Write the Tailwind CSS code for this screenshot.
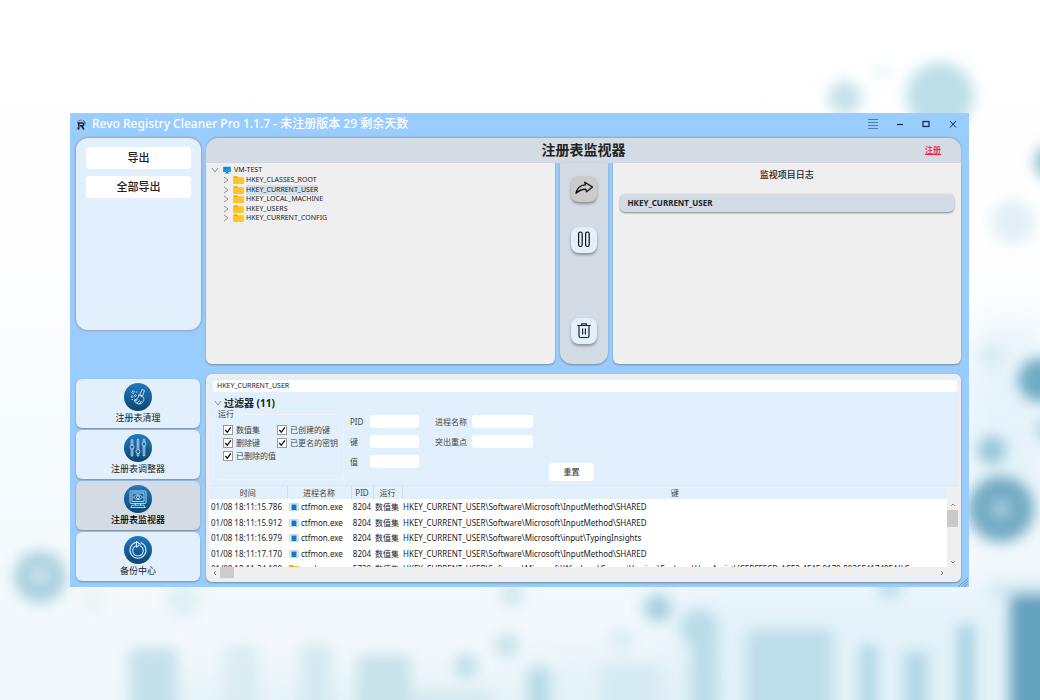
<!DOCTYPE html>
<html lang="zh-CN">
<head>
<meta charset="utf-8">
<meta name="viewport" content="width=device-width, initial-scale=1">
<title>Revo Registry Cleaner Pro</title>
<script src="https://cdn.jsdelivr.net/npm/@tailwindcss/browser@4"></script>
</head>
<body class="relative isolate min-h-screen overflow-x-hidden bg-white py-[113px] pr-[71px] pl-[70px] font-['Noto_Sans','Noto_Sans_CJK_SC',sans-serif] text-[#222]">

<!-- Backdrop -->
<svg class="absolute inset-0 -z-10 h-full w-full" viewBox="0 0 1040 700" preserveAspectRatio="xMidYMid slice" aria-hidden="true">
  <defs>
    <linearGradient id="base" x1="0" y1="0" x2="0" y2="1">
      <stop offset="0" stop-color="#ffffff"/><stop offset=".35" stop-color="#fefefe"/><stop offset=".6" stop-color="#f6fbfe"/><stop offset="1" stop-color="#f1f8fb"/>
    </linearGradient>
    <filter id="b20" x="-60%" y="-60%" width="220%" height="220%"><feGaussianBlur stdDeviation="20"/></filter>
    <filter id="b7" x="-10%" y="-10%" width="120%" height="120%"><feGaussianBlur stdDeviation="7"/></filter>
  </defs>
  <rect width="1040" height="700" fill="url(#base)"/>
  <g filter="url(#b20)">
    <ellipse cx="1010" cy="430" rx="50" ry="110" fill="#e6f3fa"/>
    <rect x="680" y="590" width="400" height="150" fill="#e3f2f9"/>
    <rect x="540" y="660" width="200" height="80" fill="#dff0f6"/>
    <rect x="150" y="680" width="500" height="60" fill="#e4f2f6"/>
  </g>
  <g filter="url(#b7)">
    <circle cx="845" cy="98" r="17" fill="#c6e2eb"/>
    <circle cx="882" cy="72" r="10" fill="#eff8fa"/>
    <circle cx="940" cy="96" r="34" fill="#bddfe8"/>
    <circle cx="1053" cy="162" r="18" fill="#8dbccd"/>
    <circle cx="1013" cy="222" r="22" fill="#e2f0f6"/>
    <circle cx="992" cy="356" r="12" fill="#d8ebf2"/>
    <circle cx="1040" cy="380" r="22" fill="#70abc4"/>
    <circle cx="992" cy="450" r="14" fill="#95c6d9"/>
    <circle cx="1001" cy="509" r="33" fill="#72abc3"/>
    <circle cx="1001" cy="509" r="9" fill="#a6d0e0"/>
    <circle cx="1046" cy="430" r="8" fill="#8dbdcf"/>
    <circle cx="40" cy="577" r="26" fill="#a9d1de"/>
    <circle cx="40" cy="575" r="8" fill="#d5eaf0"/>
    <circle cx="183" cy="600" r="17" fill="#dfeff4"/>
    <circle cx="93" cy="602" r="10" fill="#e8f3f6"/>
    <circle cx="512" cy="595" r="12" fill="#d2e8ef"/>
    <circle cx="658" cy="608" r="16" fill="#bcdde8"/>
    <circle cx="658" cy="608" r="6" fill="#7fb8cc"/>
    <circle cx="507" cy="645" r="12" fill="#c6e2eb"/>
    <circle cx="466" cy="666" r="12" fill="#bedee8"/>
    <circle cx="622" cy="640" r="13" fill="#dceef4"/>
    <circle cx="699" cy="628" r="19" fill="#b8dce7"/>
    <circle cx="890" cy="586" r="13" fill="#bfdfeb"/>
    <rect x="129" y="648" width="48" height="80" fill="#c4e1ea"/>
    <rect x="224" y="645" width="34" height="80" fill="#d9edf2"/>
    <rect x="300" y="645" width="32" height="80" fill="#d5eaf0"/>
    <rect x="357" y="655" width="54" height="80" fill="#c8e3ea"/>
    <rect x="412" y="692" width="80" height="40" fill="#d3e9ef"/>
    <rect x="528" y="668" width="22" height="80" fill="#b5dae6"/>
    <rect x="600" y="665" width="60" height="80" fill="#d6eaf2"/>
    <rect x="692" y="635" width="25" height="90" fill="#b9dce8"/>
    <rect x="747" y="630" width="86" height="95" fill="#bddde8"/>
    <rect x="860" y="645" width="17" height="80" fill="#b0d7e5"/>
    <rect x="904" y="652" width="24" height="80" fill="#b2d8e5"/>
    <rect x="958" y="625" width="16" height="100" fill="#a5d0e1"/>
    <rect x="990" y="583" width="60" height="16" fill="#d0e9f3"/>
    <rect x="1010" y="594" width="60" height="130" fill="#65a2be"/>
  </g>
</svg>

<div class="relative flex flex-col bg-[#99ccff]">
  <!-- Title bar -->
  <header class="flex h-6 items-center pr-[11px] pb-[2px] pl-[6px]">
    <svg class="mr-[6px] h-[11px] w-[10px] shrink-0" viewBox="0 0 20 22" aria-hidden="true">
      <path d="M3 8h9.500c4 0 4 5.500 0 5.500H8M5.500 8v13M11 14l5 7" fill="none" stroke="#17202c" stroke-width="3.200"/>
      <path d="M3 6.500C4.500 3 8 1.500 11.500 2.500" fill="none" stroke="#d9606a" stroke-width="2.400"/>
      <path d="M13.500 3c3.800 1.200 5.300 4.500 4.300 8" fill="none" stroke="#2a6fb0" stroke-width="2.400"/>
      <path d="M1.500 21 5 15" stroke="#2a6fb0" stroke-width="2"/>
    </svg>
    <h1 class="flex-1 truncate text-[12px] leading-[22px] font-medium text-white">Revo Registry Cleaner Pro 1.1.7 - 未注册版本 29 剩余天数</h1>
    <div class="flex items-center gap-[17px] text-[#0e2a42]">
      <button aria-label="菜单"><svg class="h-3 w-3" viewBox="0 0 12 12"><path d="M1 1.500h10M1 4.500h10M1 7.500h10M1 10.500h10" stroke="#4d7da1"/></svg></button>
      <button aria-label="最小化"><svg class="h-[10px] w-[8px]" viewBox="0 0 8 10"><path d="M1 5.500h6" stroke="currentColor" stroke-width="1.200"/></svg></button>
      <button aria-label="最大化"><svg class="h-[10px] w-[10px]" viewBox="0 0 10 10"><rect x="2" y="2.500" width="6" height="5" fill="none" stroke="currentColor" stroke-width="1.200"/></svg></button>
      <button aria-label="关闭"><svg class="h-[10px] w-[10px]" viewBox="0 0 10 10"><path d="m2 2 6 6.500m0-6.500-6 6.500" stroke="currentColor"/></svg></button>
    </div>
  </header>

  <div class="flex gap-[5px] pt-px pr-2 pb-[5px] pl-[6px]">
    <!-- Left column -->
    <aside class="flex w-[125px] shrink-0 flex-col justify-between pb-px">
      <div class="flex min-h-48 flex-col gap-[7px] rounded-xl bg-[#e1f0fc] px-[10px] pt-[9px] shadow-[0_0_2px_1px_#97a3ae]">
        <button class="h-[22px] rounded bg-white pb-[2px] text-[11px] leading-none font-medium">导出</button>
        <button class="h-[22px] rounded bg-white pb-[2px] text-[11px] leading-none font-medium">全部导出</button>
      </div>
      <nav class="mr-px flex flex-col gap-[2px] text-[9px] leading-3">
        <a href="#clean" class="flex h-[49px] flex-col items-center rounded-md bg-[#e1f0fc] pt-1 shadow-[0_1px_2px_#7d8894]">
          <svg class="mb-px h-7 w-7" viewBox="0 0 28 28" fill="none" stroke="#d4e9f8" stroke-width=".9" stroke-linecap="round" stroke-linejoin="round">
            <defs><linearGradient id="disc" x1="0" y1="0" x2="0" y2="1"><stop offset="0" stop-color="#2279bd"/><stop offset="1" stop-color="#084672"/></linearGradient></defs>
            <circle cx="14" cy="14" r="14" fill="url(#disc)" stroke="none"/>
            <path d="m18.500 6.500 2 1-2 5.500-2.300-1.200z"/><path d="M15 12l4.700 2.500c.8 2.500-.7 5.500-3.700 6.500-3 .2-5-1.400-5.700-4.100 2.500-.2 4.200-2 4.700-4.900z"/><path d="m11 18 2.600-1.300m-1 3.300 3-2.200m-.2 3 2-2.600"/><path d="m8 9 1.300-1.300L10.600 9l-1.300 1.300zM10.500 12.500l.9-.9.9.9-.9.9zM7.300 13.500l.9-.9.9.9-.9.9zM8 16.500h.5M12.500 9h.5"/>
          </svg>注册表清理
        </a>
        <a href="#tune" class="flex h-[49px] flex-col items-center rounded-md bg-[#e1f0fc] pt-1 shadow-[0_1px_2px_#7d8894]">
          <svg class="mb-px h-7 w-7" viewBox="0 0 28 28" fill="none" stroke="#c5dff2" stroke-width=".9">
            <circle cx="14" cy="14" r="14" fill="url(#disc)" stroke="none"/>
            <path d="M7.200 6.500v4.500M8.800 6.500v4.500M7.200 15v7h1.600v-7M7.200 6.500c0-1.500 1.600-1.500 1.600 0M13.200 6v9.500M14.800 6v9.500M13.200 19.500V22h1.600v-2.500M13.200 6c0-1.500 1.600-1.500 1.600 0M19.200 6v2M20.800 6v2M19.200 12v10h1.600V12M19.200 6c0-1.500 1.600-1.500 1.600 0"/><circle cx="8" cy="13" r="2"/><circle cx="14" cy="17.500" r="2"/><circle cx="20" cy="10" r="2"/>
          </svg>注册表调整器
        </a>
        <a href="#monitor" aria-current="page" class="flex h-[49px] flex-col items-center rounded-md bg-[#d3dbe5] pt-1 font-medium text-black shadow-[0_1px_2px_#7d8894]">
          <svg class="mb-px h-7 w-7" viewBox="0 0 28 28" fill="none" stroke="#c5dff2" stroke-width=".9" stroke-linejoin="round">
            <circle cx="14" cy="14" r="14" fill="url(#disc)" stroke="none"/>
            <rect x="6" y="6" width="16" height="12.500" rx="1"/><rect x="8" y="8" width="12" height="8.500"/><path d="M9.500 12.200c2.500-3.200 6.500-3.200 9 0-2.500 3.200-6.500 3.200-9 0zM11.500 18.500v1.700m5-1.700v1.700M8 20.200h12l1.200 2.300H6.800z"/><circle cx="14" cy="12.200" r="1.500"/>
          </svg>注册表监视器
        </a>
        <a href="#backup" class="flex h-[49px] flex-col items-center rounded-md bg-[#e1f0fc] pt-1 shadow-[0_1px_2px_#7d8894]">
          <svg class="mb-px h-7 w-7" viewBox="0 0 28 28" fill="none" stroke="#d4e9f8" stroke-width="1.100" stroke-linecap="round" stroke-linejoin="round">
            <circle cx="14" cy="14" r="14" fill="url(#disc)" stroke="none"/>
            <path d="M11.500 6.600a8 8 0 1 0 5.500.2"/><path d="M11.500 10a5.300 5.300 0 1 0 5 0"/><path d="m12.500 5.500 3.800 2.800-3.800 2.800z"/>
          </svg>备份中心
        </a>
      </nav>
    </aside>

    <!-- Main column -->
    <main class="flex min-w-0 flex-1 flex-col">
      <div class="grid h-[25px] grid-cols-[1fr_auto_1fr] items-center rounded-t-xl bg-[#d3dbe5] pb-[2px] shadow-[0_-1px_2px_#97a3ae]">
        <h2 class="col-start-2 text-[14px] leading-[22px] font-bold">注册表监视器</h2>
        <a href="#register" class="mr-5 justify-self-end text-[8px] leading-3 font-medium text-[#f0202a] underline">注册</a>
      </div>

      <div class="grid min-h-[201px] grid-cols-[1fr_48px_1fr] gap-[5px]">
        <!-- Registry tree -->
        <section class="min-w-0 rounded-b-md bg-[#efefef] pt-[2px] pl-[5px] text-[7px] leading-[10px] text-[#222] shadow-[0_1px_2px_#7d8894]">
          <ul>
            <li>
              <div class="flex items-center">
                <svg class="mr-1 h-2 w-2" viewBox="0 0 8 8"><path d="M1 2l3 4 3-4" fill="none" stroke="#888" stroke-width=".9"/></svg>
                <svg class="mr-[3px] h-2 w-2" viewBox="0 0 8 8"><rect x=".2" y=".8" width="7.600" height="5.400" rx=".4" fill="#1089cf"/><path d="M.3 5 7.700.8v5H.3z" fill="#22b6e8" opacity=".5"/><path d="M3 6h2v.9h1v.6H2v-.6h1z" fill="#38719b"/></svg>
                VM-TEST
              </div>
              <ul class="pl-3">
                <li class="flex h-[10px] items-center"><svg class="mr-1 h-2 w-[6px]" viewBox="0 0 6 8"><path d="m1 1 4 3-4 3" fill="none" stroke="#888" stroke-width=".9"/></svg><svg class="mr-[2px] h-2 w-[11px]" viewBox="0 0 11 8"><path d="M.5.300h3.700l1 1.200h5.300V8H.5z" fill="#f5a90d"/><path d="M.5 2h10v6H.5z" fill="#ffc61f"/></svg>HKEY_CLASSES_ROOT</li>
                <li class="flex h-[9px] items-center"><svg class="mr-1 h-2 w-[6px]" viewBox="0 0 6 8"><path d="m1 1 4 3-4 3" fill="none" stroke="#888" stroke-width=".9"/></svg><svg class="mr-[2px] h-2 w-[11px]" viewBox="0 0 11 8"><path d="M.5.300h3.700l1 1.200h5.300V8H.5z" fill="#f5a90d"/><path d="M.5 2h10v6H.5z" fill="#ffc61f"/></svg><span class="bg-[#d3dfea]">HKEY_CURRENT_USER</span></li>
                <li class="flex h-[10px] items-center"><svg class="mr-1 h-2 w-[6px]" viewBox="0 0 6 8"><path d="m1 1 4 3-4 3" fill="none" stroke="#888" stroke-width=".9"/></svg><svg class="mr-[2px] h-2 w-[11px]" viewBox="0 0 11 8"><path d="M.5.300h3.700l1 1.200h5.300V8H.5z" fill="#f5a90d"/><path d="M.5 2h10v6H.5z" fill="#ffc61f"/></svg>HKEY_LOCAL_MACHINE</li>
                <li class="flex h-[9px] items-center"><svg class="mr-1 h-2 w-[6px]" viewBox="0 0 6 8"><path d="m1 1 4 3-4 3" fill="none" stroke="#888" stroke-width=".9"/></svg><svg class="mr-[2px] h-2 w-[11px]" viewBox="0 0 11 8"><path d="M.5.300h3.700l1 1.200h5.300V8H.5z" fill="#f5a90d"/><path d="M.5 2h10v6H.5z" fill="#ffc61f"/></svg>HKEY_USERS</li>
                <li class="flex h-[10px] items-center"><svg class="mr-1 h-2 w-[6px]" viewBox="0 0 6 8"><path d="m1 1 4 3-4 3" fill="none" stroke="#888" stroke-width=".9"/></svg><svg class="mr-[2px] h-2 w-[11px]" viewBox="0 0 11 8"><path d="M.5.300h3.700l1 1.200h5.300V8H.5z" fill="#f5a90d"/><path d="M.5 2h10v6H.5z" fill="#ffc61f"/></svg>HKEY_CURRENT_CONFIG</li>
              </ul>
            </li>
          </ul>
        </section>

        <!-- Actions -->
        <div class="flex flex-col items-center rounded-b-xl bg-[#d3dbe5] pt-[13px] pb-5 shadow-[0_1px_2px_#7d8894]">
          <button aria-label="添加监视" class="mb-[25px] flex size-[26px] items-center justify-center rounded-lg bg-[#cbcbcb] shadow-[0_2px_3px_#8b9096]">
            <svg class="h-[18px] w-[20px]" viewBox="0 0 20 18" fill="none" stroke="#111" stroke-width="1.300" stroke-linejoin="round"><path d="M10.800 2.200 18.500 7l-6 4.700-.6-2.400C8.500 9 5.200 10.500 2 13.300 2.800 8.500 6.500 5 11.400 4.900z"/></svg>
          </button>
          <button aria-label="暂停" class="flex size-[26px] items-center justify-center rounded-lg bg-[#e1f0fc] shadow-[0_2px_3px_#8b9096]">
            <svg class="h-[18px] w-[14px]" viewBox="0 0 14 18" fill="none" stroke="#111" stroke-width="1.200"><rect x="1.600" y="1" width="3.600" height="14.500" rx="1.800"/><rect x="8.600" y="1" width="3.600" height="14.500" rx="1.800"/></svg>
          </button>
          <button aria-label="删除" class="mt-auto flex size-[26px] items-center justify-center rounded-lg bg-[#e1f0fc] shadow-[0_2px_3px_#8b9096]">
            <svg class="h-[16px] w-[16px]" viewBox="0 0 16 16" fill="none" stroke="#222" stroke-width="1.200"><path d="M1.300 2.500h13.400M5.700 2.500V.8h4.600v1.700M3 2.700V13c0 1 .5 1.500 1.500 1.500h7c1 0 1.500-.5 1.500-1.500V2.700M6.600 5.500v6M9.400 5.500v6"/></svg>
          </button>
        </div>

        <!-- Watched items -->
        <section class="min-w-0 rounded-b-md bg-[#efefef] px-[7px] pt-[6px] shadow-[0_1px_2px_#7d8894]">
          <h3 class="text-center text-[9px] leading-3 font-medium">监视项目日志</h3>
          <button class="mt-[13px] block h-[18px] w-full rounded-[5px] bg-[#d3dbe5] px-2 pb-px text-left text-[8px] leading-none font-bold shadow-[0_1px_2px_#7d8894]">HKEY_CURRENT_USER</button>
        </section>
      </div>

      <!-- Log -->
      <section class="mt-[10px] flex flex-col rounded-md border-[3px] border-[#efefef] bg-[#e1f0fc] pb-px text-[8px] leading-[10px] text-[#444] shadow-[0_1px_2px_#7d8894]">
        <div class="pt-[3px] pr-px pl-1">
          <input aria-label="注册表项" value="HKEY_CURRENT_USER" class="block h-3 w-full rounded-[3px] bg-white px-1 text-[7px] leading-3 text-[#222] outline-none">
        </div>
        <button class="mt-[5px] ml-[5px] flex h-3 items-center self-start text-[10px] leading-3 font-bold text-[#222]">
          <svg class="mr-[2px] h-2 w-2" viewBox="0 0 8 8"><path d="M1 2l3 4 3-4" fill="none" stroke="#888" stroke-width=".9"/></svg>过滤器 (11)
        </button>

        <div class="flex h-[76px] items-start">
          <fieldset class="ml-1 h-[71px] w-[131px] rounded-sm border border-[#edf3f7] pl-[9px]">
            <legend class="-ml-[6px] px-px">运行</legend>
            <div class="grid grid-cols-[54px_auto] justify-start gap-y-[3px] pt-[6px] whitespace-nowrap">
              <label class="flex items-center gap-[3px]"><span class="grid"><input type="checkbox" checked class="peer col-start-1 row-start-1 size-[10px] appearance-none border border-[#999] bg-white"><svg class="pointer-events-none invisible col-start-1 row-start-1 size-[10px] peer-checked:visible" viewBox="0 0 10 10"><path d="m2.300 5 2 2.300 3.500-5" fill="none" stroke="#111" stroke-width="1.300"/></svg></span>数值集</label>
              <label class="flex items-center gap-[3px]"><span class="grid"><input type="checkbox" checked class="peer col-start-1 row-start-1 size-[10px] appearance-none border border-[#999] bg-white"><svg class="pointer-events-none invisible col-start-1 row-start-1 size-[10px] peer-checked:visible" viewBox="0 0 10 10"><path d="m2.300 5 2 2.300 3.500-5" fill="none" stroke="#111" stroke-width="1.300"/></svg></span>已创建的键</label>
              <label class="flex items-center gap-[3px]"><span class="grid"><input type="checkbox" checked class="peer col-start-1 row-start-1 size-[10px] appearance-none border border-[#999] bg-white"><svg class="pointer-events-none invisible col-start-1 row-start-1 size-[10px] peer-checked:visible" viewBox="0 0 10 10"><path d="m2.300 5 2 2.300 3.500-5" fill="none" stroke="#111" stroke-width="1.300"/></svg></span>删除键</label>
              <label class="flex items-center gap-[3px]"><span class="grid"><input type="checkbox" checked class="peer col-start-1 row-start-1 size-[10px] appearance-none border border-[#999] bg-white"><svg class="pointer-events-none invisible col-start-1 row-start-1 size-[10px] peer-checked:visible" viewBox="0 0 10 10"><path d="m2.300 5 2 2.300 3.500-5" fill="none" stroke="#111" stroke-width="1.300"/></svg></span>已更名的密钥</label>
              <label class="flex items-center gap-[3px]"><span class="grid"><input type="checkbox" checked class="peer col-start-1 row-start-1 size-[10px] appearance-none border border-[#999] bg-white"><svg class="pointer-events-none invisible col-start-1 row-start-1 size-[10px] peer-checked:visible" viewBox="0 0 10 10"><path d="m2.300 5 2 2.300 3.500-5" fill="none" stroke="#111" stroke-width="1.300"/></svg></span>已删除的值</label>
            </div>
          </fieldset>
          <div class="ml-[6px] grid grid-cols-[20px_49px_16px_37px_61px] items-center gap-y-[7px] pt-[6px] whitespace-nowrap">
            <label for="f-pid">PID</label><input id="f-pid" class="h-[13px] w-full rounded-[3px] bg-white px-1 outline-none">
            <label for="f-proc" class="col-start-4">进程名称</label><input id="f-proc" class="h-[13px] w-full rounded-[3px] bg-white px-1 outline-none">
            <label for="f-key">键</label><input id="f-key" class="h-[13px] w-full rounded-[3px] bg-white px-1 outline-none">
            <label for="f-hl" class="col-start-4">突出重点</label><input id="f-hl" class="h-[13px] w-full rounded-[3px] bg-white px-1 outline-none">
            <label for="f-val">值</label><input id="f-val" class="h-[13px] w-full rounded-[3px] bg-white px-1 outline-none">
          </div>
          <button class="mb-[4px] ml-4 h-[18px] w-[45px] self-end rounded bg-white font-medium">重置</button>
        </div>

        <div class="flex border-t border-[#e3e6e8]">
          <div class="h-[81px] min-w-0 flex-1 overflow-hidden bg-white">
            <table class="w-full table-fixed border-collapse text-[8px] whitespace-nowrap text-[#222]">
              <colgroup><col class="w-[78px]"><col class="w-[64px]"><col class="w-[22px]"><col class="w-[29px]"><col></colgroup>
              <thead class="bg-[#e1f0fc] leading-3 text-[#444]">
                <tr class="h-[13px] *:border-r *:border-[#d5dde3] *:p-0 *:font-normal *:last:border-r-0"><th>时间</th><th>进程名称</th><th>PID</th><th>运行</th><th>键</th></tr>
              </thead>
              <tbody class="leading-[14px]">
                <tr class="h-4 *:p-0"><td class="pl-[2px]!">01/08 18:11:15.786</td><td><div class="flex items-center gap-[2px] pl-[2px]"><svg class="h-2 w-[10px] shrink-0" viewBox="0 0 10 8"><path d="M.5.500h9v7h-9z" fill="#eaf0f4" stroke="#b8c2c9" stroke-width=".6"/><path d="M2.500 1.500h5v5.500h-5z" fill="#0b7bd0"/></svg>ctfmon.exe</div></td><td class="text-center">8204</td><td class="pl-[2px]!">数值集</td><td class="pl-px!">HKEY_CURRENT_USER\Software\Microsoft\InputMethod\SHARED</td></tr>
                <tr class="h-[15px] *:p-0"><td class="pl-[2px]!">01/08 18:11:15.912</td><td><div class="flex items-center gap-[2px] pl-[2px]"><svg class="h-2 w-[10px] shrink-0" viewBox="0 0 10 8"><path d="M.5.500h9v7h-9z" fill="#eaf0f4" stroke="#b8c2c9" stroke-width=".6"/><path d="M2.500 1.500h5v5.500h-5z" fill="#0b7bd0"/></svg>ctfmon.exe</div></td><td class="text-center">8204</td><td class="pl-[2px]!">数值集</td><td class="pl-px!">HKEY_CURRENT_USER\Software\Microsoft\InputMethod\SHARED</td></tr>
                <tr class="h-4 *:p-0"><td class="pl-[2px]!">01/08 18:11:16.979</td><td><div class="flex items-center gap-[2px] pl-[2px]"><svg class="h-2 w-[10px] shrink-0" viewBox="0 0 10 8"><path d="M.5.500h9v7h-9z" fill="#eaf0f4" stroke="#b8c2c9" stroke-width=".6"/><path d="M2.500 1.500h5v5.500h-5z" fill="#0b7bd0"/></svg>ctfmon.exe</div></td><td class="text-center">8204</td><td class="pl-[2px]!">数值集</td><td class="pl-px!">HKEY_CURRENT_USER\Software\Microsoft\input\TypingInsights</td></tr>
                <tr class="h-[15px] *:p-0"><td class="pl-[2px]!">01/08 18:11:17.170</td><td><div class="flex items-center gap-[2px] pl-[2px]"><svg class="h-2 w-[10px] shrink-0" viewBox="0 0 10 8"><path d="M.5.500h9v7h-9z" fill="#eaf0f4" stroke="#b8c2c9" stroke-width=".6"/><path d="M2.500 1.500h5v5.500h-5z" fill="#0b7bd0"/></svg>ctfmon.exe</div></td><td class="text-center">8204</td><td class="pl-[2px]!">数值集</td><td class="pl-px!">HKEY_CURRENT_USER\Software\Microsoft\InputMethod\SHARED</td></tr>
                <tr class="h-4 *:p-0"><td class="pl-[2px]!">01/08 18:11:24.180</td><td><div class="flex items-center gap-[2px] pl-[2px]"><svg class="h-2 w-[10px] shrink-0" viewBox="0 0 10 8"><path d="M0 0h4l1 1.200h5V8H0z" fill="#f5a90d"/></svg>explorer.exe</div></td><td class="text-center">5720</td><td class="pl-[2px]!">数值集</td><td class="overflow-hidden pl-px!">HKEY_CURRENT_USER\Software\Microsoft\Windows\CurrentVersion\Explorer\UserAssist\{CEBFF5CD-ACE2-4F4F-9178-9926F41749EA}\C</td></tr>
              </tbody>
            </table>
          </div>
          <div class="flex w-[11px] flex-col items-center bg-[#efefef] pt-4" aria-hidden="true">
            <svg class="mb-[2px] h-[6px] w-[6px]" viewBox="0 0 6 6"><path d="m1 4 2-2 2 2" fill="none" stroke="#888"/></svg>
            <div class="h-[17px] w-full bg-[#c9c9c9]"></div>
            <svg class="mt-auto mb-[2px] h-[6px] w-[6px]" viewBox="0 0 6 6"><path d="m1 2 2 2 2-2" fill="none" stroke="#888"/></svg>
          </div>
        </div>
        <div class="flex h-[11px] items-center bg-[#efefef] pr-[13px] pl-[3px]" aria-hidden="true">
          <svg class="mr-[2px] h-[6px] w-[6px]" viewBox="0 0 6 6"><path d="M4 1 2 3l2 2" fill="none" stroke="#888"/></svg>
          <div class="h-full w-[14px] bg-[#cdcdcd]"></div>
          <svg class="ml-auto h-[6px] w-[6px]" viewBox="0 0 6 6"><path d="m2 1 2 2-2 2" fill="none" stroke="#888"/></svg>
        </div>
      </section>
    </main>
  </div>
  <svg class="absolute right-px bottom-0 h-[10px] w-[10px]" viewBox="0 0 10 10" aria-hidden="true"><path d="m0 10 10-9M3 10l7-6M6 10l4-3.500" stroke="#6d87a0" stroke-width=".8"/></svg>
</div>
</body>
</html>
